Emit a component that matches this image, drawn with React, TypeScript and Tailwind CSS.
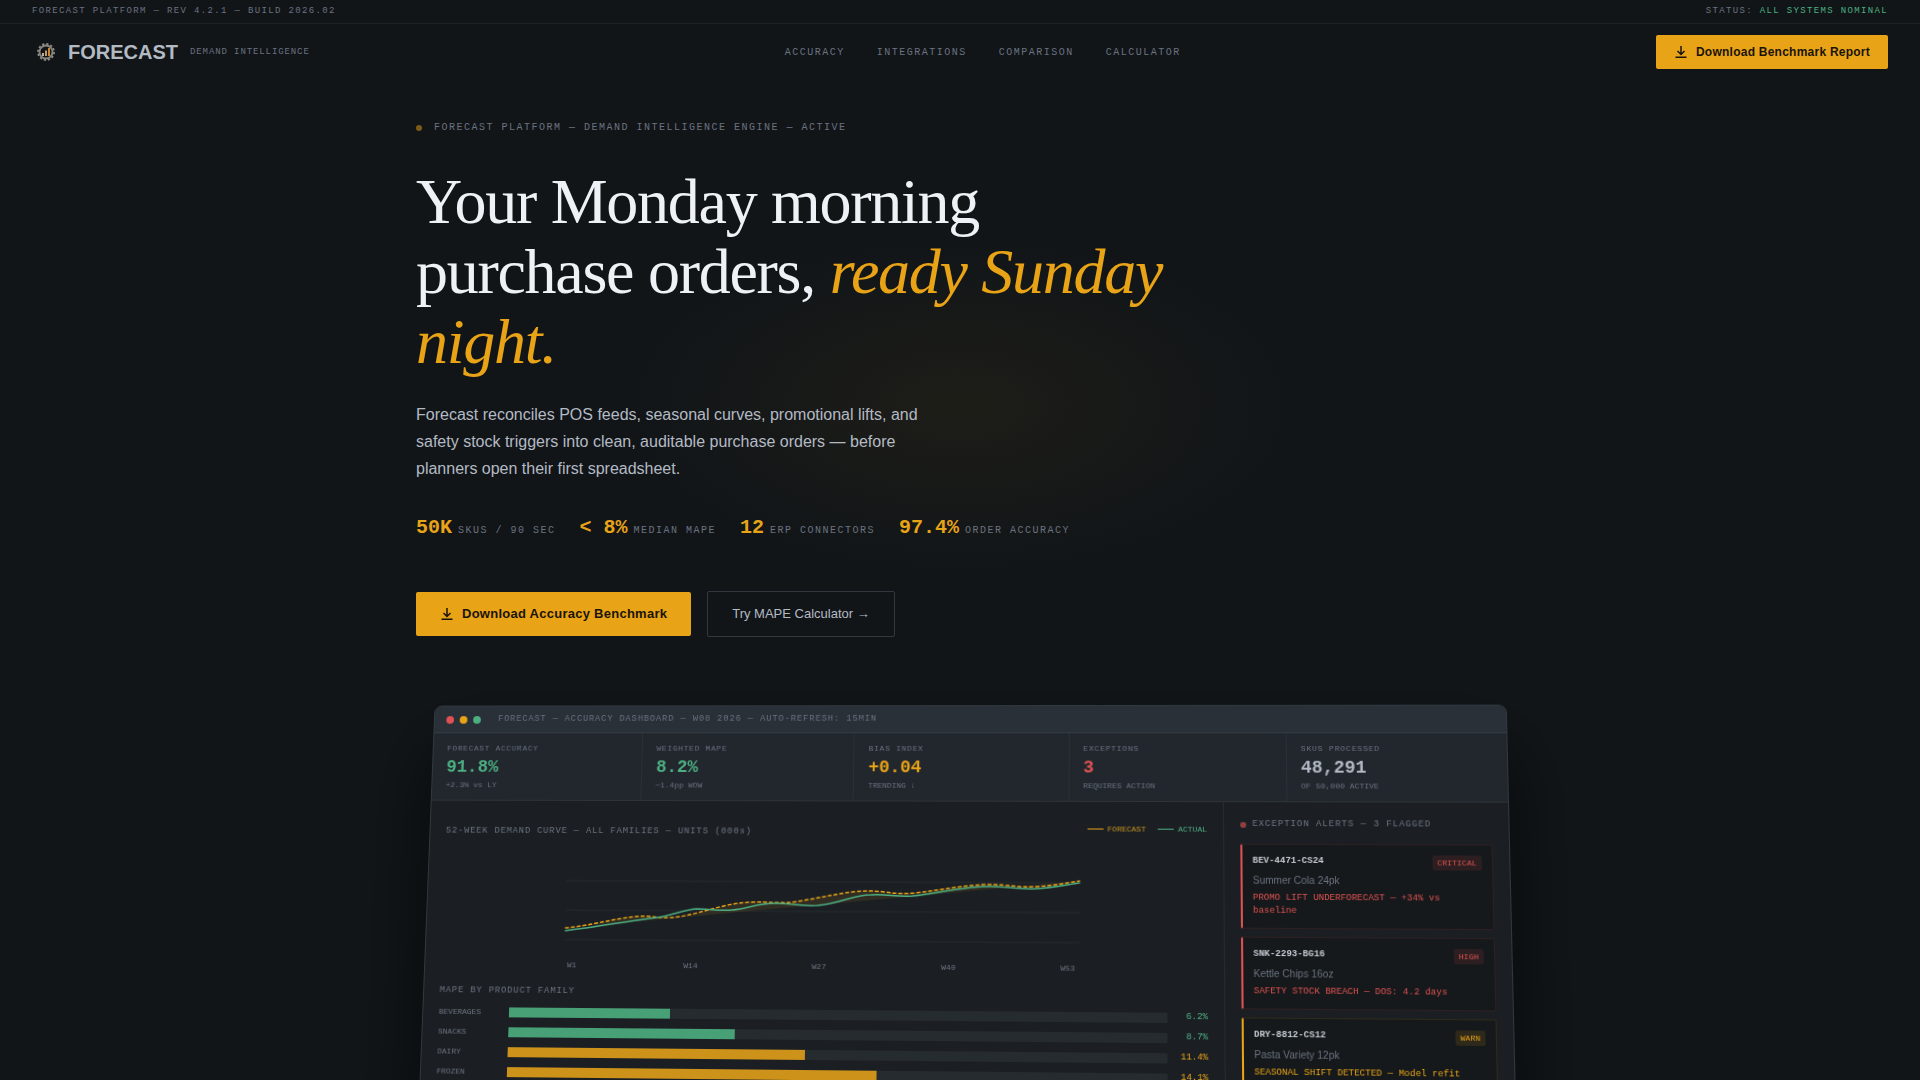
import clsx from "clsx";

type Tone = "green" | "amber" | "red" | "plain";

const TEXT: Record<Tone, string> = {
  green: "text-[#4caf82]",
  amber: "text-[#e8a317]",
  red: "text-[#e05252]",
  plain: "text-[#b4bac4]",
};

const MONO = "font-['Liberation_Mono',monospace]";
const SERIF = "font-['Liberation_Serif',serif]";

const NAV = ["Accuracy", "Integrations", "Comparison", "Calculator"];

const STATS = [
  { value: "50K", label: "SKUs / 90 sec" },
  { value: "< 8%", label: "Median MAPE" },
  { value: "12", label: "ERP connectors" },
  { value: "97.4%", label: "Order accuracy" },
];

const KPIS: { label: string; value: string; sub: string; tone: Tone }[] = [
  { label: "FORECAST ACCURACY", value: "91.8%", sub: "+2.3% vs LY", tone: "green" },
  { label: "WEIGHTED MAPE", value: "8.2%", sub: "−1.4pp WOW", tone: "green" },
  { label: "BIAS INDEX", value: "+0.04", sub: "TRENDING ↓", tone: "amber" },
  { label: "EXCEPTIONS", value: "3", sub: "REQUIRES ACTION", tone: "red" },
  { label: "SKUS PROCESSED", value: "48,291", sub: "OF 50,000 ACTIVE", tone: "plain" },
];

const FAMILIES: { name: string; mape: number; tone: Tone }[] = [
  { name: "BEVERAGES", mape: 6.2, tone: "green" },
  { name: "SNACKS", mape: 8.7, tone: "green" },
  { name: "DAIRY", mape: 11.4, tone: "amber" },
  { name: "FROZEN", mape: 14.1, tone: "amber" },
];

const ALERTS = [
  { sku: "BEV-4471-CS24", name: "Summer Cola 24pk", msg: "PROMO LIFT UNDERFORECAST — +34% vs baseline", level: "CRITICAL" },
  { sku: "SNK-2293-BG16", name: "Kettle Chips 16oz", msg: "SAFETY STOCK BREACH — DOS: 4.2 days", level: "HIGH" },
  { sku: "DRY-8812-CS12", name: "Pasta Variety 12pk", msg: "SEASONAL SHIFT DETECTED — Model refit required", level: "WARN" },
  { sku: "FRZ-1034-BX08", name: "Garden Peas 8ct", msg: "LEAD TIME DRIFT — +2 days", level: "WARN" },
];

const WEEKS = [
  { x: 8, label: "W1" },
  { x: 129, label: "W14" },
  { x: 259, label: "W27" },
  { x: 389, label: "W40" },
  { x: 508, label: "W53" },
];

const FORECAST_PATH =
  "M0 78 C25 76 50 68 74 66 C90 65 96 68 108 67 C135 65 158 52 190 51 C208 50 220 53 236 50 C262 46 286 39 308 39 C326 39 334 43 354 41 C380 38 402 33 428 32 C448 32 458 35 476 34 C494 33 506 30 520 28";
const ACTUAL_PATH =
  "M0 81 C32 77 64 71 94 67 C112 64 120 59 134 58 C148 58 156 60 170 59 C186 58 194 52 214 52 C230 52 238 55 256 54 C280 52 292 43 310 43 C326 42 336 45 352 44 C378 41 404 34 430 34 C446 34 460 37 476 36 C494 35 506 32 520 30";

function DownloadIcon() {
  return (
    <svg className="size-3.5" viewBox="0 0 14 14" fill="none" stroke="currentColor" strokeWidth="1.5" aria-hidden="true">
      <path d="M7 1v8M3.5 6 7 9.5 10.500 6M1.500 12.200h11" />
    </svg>
  );
}

function LogoMark() {
  return (
    <svg className="size-7" viewBox="0 0 28 28" fill="none" aria-hidden="true">
      <circle cx="14" cy="14" r="8" stroke="#8a8e93" strokeWidth="1.800" strokeDasharray="2.200 1.990" />
      <circle cx="14" cy="14" r="6.500" stroke="#8b8478" strokeWidth="1.900" />
      <path d="M11 18v-3" stroke="#b9b4aa" strokeWidth="2" />
      <path d="M14 18v-5.500" stroke="#c79a55" strokeWidth="2" />
      <path d="M17 18v-8" stroke="#c98a33" strokeWidth="2" />
    </svg>
  );
}

function TopBar() {
  return (
    <div
      className={clsx(
        MONO,
        "flex justify-between border-b border-[#1d2225] px-8 py-1 text-[9px] leading-[15px] tracking-[0.15em] text-[#6b7280]",
      )}
    >
      <span>FORECAST PLATFORM — REV 4.2.1 — BUILD 2026.02</span>
      <span>
        STATUS: <span className="text-[#4caf82]">ALL SYSTEMS NOMINAL</span>
      </span>
    </div>
  );
}

function Header() {
  return (
    <header className="flex h-14 items-center justify-between px-8">
      <a href="#" className="flex items-center">
        <LogoMark />
        <span className="ml-2 text-xl font-bold text-[#b4bac4]">FORECAST</span>
        <span className={clsx(MONO, "ml-3 pt-0.5 text-[9px] tracking-widest text-[#6b7280]")}>DEMAND INTELLIGENCE</span>
      </a>
      <nav className={clsx(MONO, "flex gap-8 text-[10px] tracking-[0.15em] text-[#6b7280] uppercase")}>
        {NAV.map((item) => (
          <a key={item} href={`#${item.toLowerCase()}`}>
            {item}
          </a>
        ))}
      </nav>
      <button
        type="button"
        className="flex h-[34px] items-center gap-2 rounded-xs bg-[#e8a317] px-[18px] text-xs font-bold tracking-[0.02em] text-[#1a1408]"
      >
        <DownloadIcon />
        Download Benchmark Report
      </button>
    </header>
  );
}

function Hero() {
  return (
    <section className="relative pt-10">
      <div className="pointer-events-none absolute top-[125px] left-1/2 h-[400px] w-[800px] -translate-x-1/2 bg-[radial-gradient(ellipse,rgba(232,163,23,0.06)_0%,transparent_60%)]" />
      <div className="relative">
        <p className={clsx(MONO, "flex items-center gap-3 text-[10px] leading-[15px] tracking-[0.15em] text-[#6b7280]")}>
          <span className="size-1.5 rounded-full bg-[#e8a317] opacity-50" />
          FORECAST PLATFORM — DEMAND INTELLIGENCE ENGINE — ACTIVE
        </p>
        <h1 className={clsx(SERIF, "mt-8 max-w-[780px] text-[64px] leading-[70px] tracking-[-0.02em] text-[#eef1f5]")}>
          Your Monday morning purchase orders, <em className="text-[#e8a317]">ready Sunday night.</em>
        </h1>
        <p className="mt-6 max-w-[520px] text-base leading-[27px] text-[#b4bac4]">
          Forecast reconciles POS feeds, seasonal curves, promotional lifts, and safety stock triggers into clean,
          auditable purchase orders — before planners open their first spreadsheet.
        </p>
        <dl className={clsx(MONO, "mt-[34px] flex flex-wrap gap-x-6 leading-6")}>
          {STATS.map((s) => (
            <div key={s.label} className="flex flex-row-reverse items-baseline gap-1.5">
              <dt className="text-[10px] tracking-[0.15em] text-[#6b7280] uppercase">{s.label}</dt>
              <dd className="text-xl leading-6 font-bold text-[#e8a317]">{s.value}</dd>
            </div>
          ))}
        </dl>
        <div className="mt-12 flex items-center gap-4">
          <button
            type="button"
            className="flex h-11 items-center gap-2 rounded-xs bg-[#e8a317] px-6 text-[13px] font-bold tracking-[0.02em] text-[#1a1408]"
          >
            <DownloadIcon />
            Download Accuracy Benchmark
          </button>
          <a
            href="#calculator"
            className="flex h-[46px] items-center rounded-xs border border-[#32383f] px-6 text-[13px] text-[#b4bac4]"
          >
            Try MAPE Calculator →
          </a>
        </div>
      </div>
    </section>
  );
}

function KpiStrip() {
  return (
    <div className={clsx(MONO, "grid grid-cols-5 border-b border-[#2e343a] bg-[#22272e]")}>
      {KPIS.map((k) => (
        <div key={k.label} className="border-r border-[#2a3037] px-3.5 py-2.5 last:border-r-0">
          <div className="text-[8px] leading-3 tracking-widest text-[#6b7280]">{k.label}</div>
          <div className={clsx("text-lg leading-[26px] font-bold", TEXT[k.tone])}>{k.value}</div>
          <div className="text-[8px] leading-[11px] text-[#6b7280]">{k.sub}</div>
        </div>
      ))}
    </div>
  );
}

function DemandChart() {
  return (
    <>
      <div className={clsx(MONO, "flex items-start justify-between")}>
        <h2 className="text-[9px] leading-[18px] tracking-widest text-[#6b7280]">
          52-WEEK DEMAND CURVE — ALL FAMILIES — UNITS (000s)
        </h2>
        <div className="flex gap-3 text-[8px] leading-[11px]">
          <span className="flex items-center gap-1 text-[#c9921e]">
            <span className="h-px w-4 bg-[#e8a317]" />
            FORECAST
          </span>
          <span className="flex items-center gap-1 text-[#4caf82]">
            <span className="h-px w-4 bg-[#4caf82]" />
            ACTUAL
          </span>
        </div>
      </div>
      <svg className="mt-3 h-[120px] w-full" viewBox="0 0 520 120" fill="none" role="img" aria-label="Demand curve">
        {[30, 60, 90].map((y) => (
          <path key={y} d={`M0 ${y}H520`} stroke="#252a2f" />
        ))}
        <path d={FORECAST_PATH} fill="#e8a317" fillOpacity="0.1" />
        <path d={FORECAST_PATH} stroke="#e8a317" strokeWidth="1.500" strokeDasharray="4 2" />
        <path d={ACTUAL_PATH} stroke="#4caf82" strokeWidth="1.500" />
        {WEEKS.map((w) => (
          <text
            key={w.label}
            x={w.x}
            y="118"
            textAnchor="middle"
            className={clsx(MONO, "fill-[#6b7280] text-[8px]")}
          >
            {w.label}
          </text>
        ))}
      </svg>
    </>
  );
}

function FamilyBars() {
  return (
    <div className={MONO}>
      <h2 className="mt-[17px] mb-[11px] text-[9px] leading-[11px] tracking-widest text-[#6b7280]">
        MAPE BY PRODUCT FAMILY
      </h2>
      <ul className="flex flex-col gap-2.5">
        {FAMILIES.map((f) => (
          <li key={f.name} className="flex h-2.5 items-center gap-2">
            <span className="w-16 text-[8px] text-[#6b7280]">{f.name}</span>
            <span className="h-2.5 flex-1 bg-[#262b2f]">
              <span
                className={clsx("block h-full", f.tone === "green" ? "bg-[#47a076]" : "bg-[#cc9219]")}
                style={{ width: `${f.mape * 4}%` }}
              />
            </span>
            <span className={clsx("w-8 text-right text-[9px]", TEXT[f.tone])}>{f.mape.toFixed(1)}%</span>
          </li>
        ))}
      </ul>
    </div>
  );
}

function AlertList() {
  return (
    <aside className="border-l border-[#262b30] px-4 pt-[17px] pb-4">
      <h2 className={clsx(MONO, "flex items-center gap-1.5 text-[9px] leading-[11px] tracking-widest text-[#6b7280]")}>
        <span className="size-1.5 rounded-full bg-[#e05252] opacity-60" />
        EXCEPTION ALERTS — 3 FLAGGED
      </h2>
      <ul className="mt-3.5 flex flex-col gap-2">
        {ALERTS.map((a) => {
          const warn = a.level === "WARN";
          return (
            <li
              key={a.sku}
              className={clsx(
                "rounded-xs border border-l-2 bg-[#15191b] p-2.5",
                warn ? "border-[#e8a317]/12 border-l-[#e8a317]" : "border-[#e05252]/12 border-l-[#e05252]",
              )}
            >
              <div className={clsx(MONO, "flex items-start justify-between")}>
                <span className="text-[9px] leading-[13px] font-bold text-[#c3c9d1]">{a.sku}</span>
                <span
                  className={clsx(
                    "rounded-xs px-[5px] py-0.5 text-[8px] leading-[11px]",
                    warn ? "bg-[#e8a317]/12 text-[#e8a317]" : "bg-[#e05252]/12 text-[#e05252]",
                  )}
                >
                  {a.level}
                </span>
              </div>
              <p className="mt-[3px] text-[10px] leading-4 text-[#6b7280]">{a.name}</p>
              <p className={clsx(MONO, "mt-[3px] text-[9px] leading-[13px]", warn ? TEXT.amber : TEXT.red)}>{a.msg}</p>
            </li>
          );
        })}
      </ul>
    </aside>
  );
}

function Dashboard() {
  return (
    <section className="mt-16 overflow-hidden rounded-lg border border-[#32383f] bg-[#1b1f23] shadow-[0_40px_80px_rgba(0,0,0,0.6)] [transform:perspective(1200px)_rotateX(4deg)_rotateY(-2deg)_rotateZ(0.5deg)]">
      <div className="flex items-center gap-1.5 border-b border-[#353c44] bg-[#2a3038] px-3 py-[7px]">
        <span className="size-2 rounded-full bg-[#e05252]" />
        <span className="size-2 rounded-full bg-[#e8a317]" />
        <span className="size-2 rounded-full bg-[#4caf82]" />
        <span className={clsx(MONO, "ml-3 text-[9px] leading-[13px] tracking-widest text-[#6b7280]")}>
          FORECAST — ACCURACY DASHBOARD — W08 2026 — AUTO-REFRESH: 15MIN
        </span>
      </div>
      <KpiStrip />
      <div className="grid grid-cols-[1fr_281px]">
        <div className="px-4 pt-[22px] pb-4">
          <DemandChart />
          <FamilyBars />
        </div>
        <AlertList />
      </div>
    </section>
  );
}

export default function App() {
  return (
    <div className="min-h-screen overflow-hidden bg-[#111518] font-['Liberation_Sans',sans-serif]">
      <TopBar />
      <Header />
      <main className="mx-auto max-w-[1088px] pb-24">
        <Hero />
        <Dashboard />
      </main>
    </div>
  );
}
